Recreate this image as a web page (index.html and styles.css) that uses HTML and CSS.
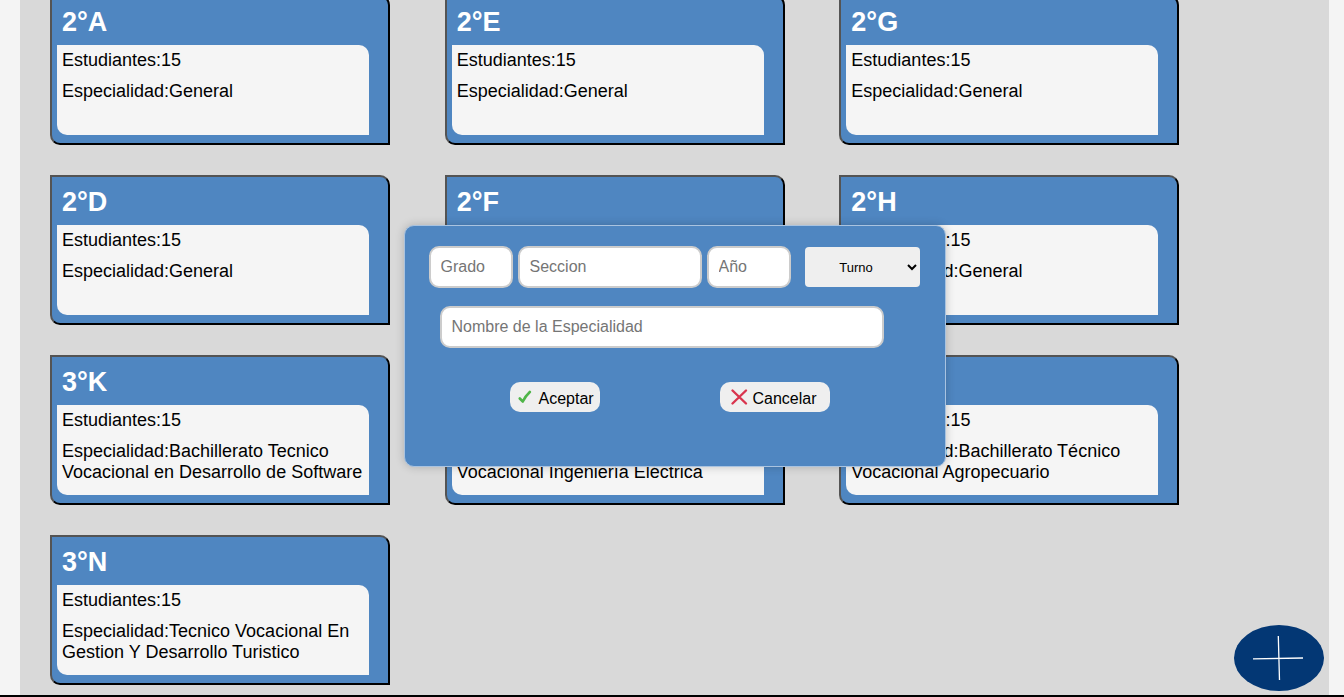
FILE: index.html
```html
<!DOCTYPE html>
<html lang="es">
<head>
<meta charset="utf-8">
<meta name="viewport" content="width=device-width, initial-scale=1">
<title>Grados</title>
<link rel="stylesheet" href="styles.css">
</head>
<body>
<main class="board">
  <section class="grid">
    <article class="card"><h2 class="card-title">2°A</h2><div class="card-body"><p>Estudiantes:15</p><p>Especialidad:General</p></div></article>
    <article class="card"><h2 class="card-title">2°E</h2><div class="card-body"><p>Estudiantes:15</p><p>Especialidad:General</p></div></article>
    <article class="card"><h2 class="card-title">2°G</h2><div class="card-body"><p>Estudiantes:15</p><p>Especialidad:General</p></div></article>
    <article class="card"><h2 class="card-title">2°D</h2><div class="card-body"><p>Estudiantes:15</p><p>Especialidad:General</p></div></article>
    <article class="card"><h2 class="card-title">2°F</h2><div class="card-body"><p>Estudiantes:15</p><p>Especialidad:General</p></div></article>
    <article class="card"><h2 class="card-title">2°H</h2><div class="card-body"><p>Estudiantes:15</p><p>Especialidad:General</p></div></article>
    <article class="card"><h2 class="card-title">3°K</h2><div class="card-body"><p>Estudiantes:15</p><p>Especialidad:Bachillerato Tecnico Vocacional en Desarrollo de Software</p></div></article>
    <article class="card"><h2 class="card-title">3°L</h2><div class="card-body"><p>Estudiantes:15</p><p>Especialidad:Bachillerato Técnico Vocacional Ingeniería Eléctrica</p></div></article>
    <article class="card"><h2 class="card-title">3°M</h2><div class="card-body"><p>Estudiantes:15</p><p>Especialidad:Bachillerato Técnico Vocacional Agropecuario</p></div></article>
    <article class="card"><h2 class="card-title">3°N</h2><div class="card-body"><p>Estudiantes:15</p><p>Especialidad:Tecnico Vocacional En Gestion Y Desarrollo Turistico</p></div></article>
  </section>

  <form class="dialog" role="dialog" aria-label="Nuevo grado">
    <div class="row">
      <input class="field field-small" type="text" placeholder="Grado" aria-label="Grado">
      <input class="field field-medium" type="text" placeholder="Seccion" aria-label="Seccion">
      <input class="field field-small" type="text" placeholder="Año" aria-label="Año">
      <select class="shift" aria-label="Turno"><option>Turno</option></select>
    </div>
    <input class="field field-wide" type="text" placeholder="Nombre de la Especialidad" aria-label="Nombre de la Especialidad">
    <div class="actions">
      <button class="action accept" type="button">
        <svg width="14" height="16" viewBox="0 0 14 16" aria-hidden="true"><path d="M1.800 9.500L4.800 12.500Q7.500 7 11.800 3" fill="none" stroke="#4fb548" stroke-width="2.600" stroke-linecap="round" stroke-linejoin="round"/></svg>
        <span>Aceptar</span>
      </button>
      <button class="action cancel" type="button">
        <svg width="18" height="18" viewBox="0 0 18 18" aria-hidden="true"><path d="M2.500 2.500L16 15.500M16 2.500L2.500 15.500" fill="none" stroke="#d9344e" stroke-width="2.400" stroke-linecap="round"/></svg>
        <span>Cancelar</span>
      </button>
    </div>
  </form>
</main>
<button class="add" type="button" aria-label="Agregar">
  <svg width="52" height="46" viewBox="0 0 52 46" aria-hidden="true"><path d="M0 23.800L50 23M25.300 1L26.500 45" fill="none" stroke="#fff" stroke-width="1.300"/></svg>
</button>
</body>
</html>
```

FILE: styles.css
```css
* { box-sizing: border-box; }

body {
  margin: 0;
  min-height: 100vh;
  background: #f4f4f4;
  color: #000;
  font-family: Arial, "Liberation Sans", sans-serif;
  border-bottom: 2px solid #000;
  overflow: hidden;
}

.board {
  position: relative;
  display: flow-root;
  margin: 0 15px 0 20px;
  padding: 0 95px 10px 30px;
  background: #d9d9d9;
}

/* The first row is scrolled slightly past the top edge. */
.grid {
  display: grid;
  grid-template-columns: repeat(3, 1fr);
  row-gap: 30px;
  margin-top: -5px;
}

.card {
  width: 340px;
  min-height: 150px;
  padding: 0 19px 8px 5px;
  background: #4f86c1;
  border: 2px outset #000;
  border-radius: 0 10px 0 10px;
}

.card-title {
  margin: 0;
  padding: 9px 5px 7px;
  color: #fff;
  font-size: 27px;
  line-height: 32px;
}

.card-body {
  min-height: 90px;
  padding: 5px 0 5px 5px;
  background: #f5f5f5;
  border-radius: 0 10px 0 10px;
  font-size: 18px;
  line-height: 21px;
}

.card-body p { margin: 0 0 10px; }
.card-body p:last-child { margin: 0; }

.dialog {
  position: absolute;
  top: 225px;
  left: 50%;
  transform: translateX(-50%);
  width: 542px;
  min-height: 242px;
  padding: 20px 24px;
  background: #4f86c1;
  border: 1px solid #a9c3e0;
  border-radius: 10px;
  box-shadow: 0 0 10px rgba(0, 0, 0, 0.2);
}

.row {
  display: flex;
  align-items: center;
  gap: 5px;
}

.field {
  height: 42px;
  padding: 0 10px;
  background: #fff;
  border: 2px solid #ccc;
  border-radius: 10px;
  font-family: inherit;
  font-size: 16px;
}

.field::placeholder { color: #757575; }
.field-small { width: 84px; }
.field-medium { width: 184px; }

.field-wide {
  display: block;
  width: 444px;
  margin: 18px 0 0 11px;
}

.shift {
  width: 115px;
  height: 40px;
  margin-left: 9px;
  background: #efefef;
  border: 0;
  border-radius: 4px;
  color: #000;
  font-family: inherit;
  font-size: 13px;
  text-align: center;
}

.actions {
  display: flex;
  align-items: center;
  gap: 120px;
  margin: 34px 0 0 81px;
}

.action {
  display: flex;
  align-items: center;
  height: 30px;
  background: #efefef;
  border: 0;
  border-radius: 10px;
  color: #000;
  font-family: inherit;
  font-size: 16px;
}

.action span { padding-top: 4px; }

.accept {
  width: 90px;
  gap: 7px;
  padding: 0 0 0 8px;
}

.cancel {
  width: 110px;
  gap: 5px;
  padding: 0 0 0 10px;
}

.add {
  position: fixed;
  right: 20px;
  bottom: 6px;
  display: grid;
  place-items: center;
  width: 90px;
  height: 66px;
  padding: 0;
  background: #033774;
  border: 0;
  border-radius: 50%;
}
```
